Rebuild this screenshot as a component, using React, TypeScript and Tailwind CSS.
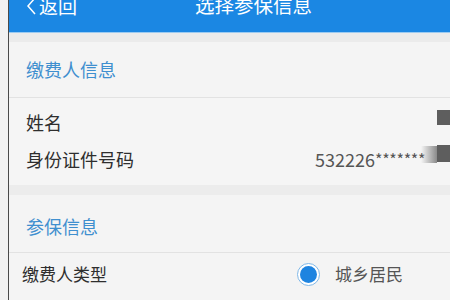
import React from "react";

const font = { fontFamily: '"Noto Sans CJK SC", "Noto Sans", sans-serif' };

export default function App() {
  return (
    <div className="w-[450px] h-[300px] overflow-hidden flex bg-[#f4f4f4]" style={font}>
      <div className="w-[8px] bg-[#f2f2f2]" />
      <div className="w-[1px] bg-[#4a4a4a]" />
      <div className="flex-1 flex flex-col">
        <div className="h-[32px] bg-[#1b87e3] relative overflow-hidden">
          <div className="absolute left-[17px] top-[-8px] flex items-center text-white text-[19px] leading-[28px]">
            <svg width="11" height="20" viewBox="0 0 11 20" className="mr-[2px]">
              <path d="M9 2 L2 10 L9 18" fill="none" stroke="white" strokeWidth="1.5" />
            </svg>
            <span>返回</span>
          </div>
          <div className="absolute left-[186px] top-[-9px] text-white text-[19.5px] leading-[28px]">选择参保信息</div>
        </div>
        <div className="h-[1px] bg-[#9ccbf1]" />
        <div className="h-[9px] bg-[#ebebeb]" />
        <div className="h-[55px] flex items-center pl-[17px] text-[18px] text-[#3f8fcf]">缴费人信息</div>
        <div className="h-[1px] bg-[#e2e2e2]" />
        <div className="pt-[6px] pb-[7px] bg-[#f5f5f5]">
          <div className="h-[37px] flex items-center pl-[17px] pr-0 text-[18px] text-[#2e2e2e] relative">
            <span>姓名</span>
            <div className="absolute right-0 top-[6px] w-[13px] h-[15px] bg-[#5e5e5e]" />
          </div>
          <div className="h-[37px] flex items-center pl-[17px] text-[18px] text-[#2e2e2e] relative">
            <span>身份证件号码</span>
            <span className="absolute left-[306px] top-[5px] text-[#555] text-[18px] leading-[26px] whitespace-nowrap">
              532226<span className="text-[16px] tracking-[-0.3px] align-[1px]">*******</span>
            </span>
            <div className="absolute right-[13px] top-[5px] w-[16px] h-[17px] bg-gradient-to-r from-[#f5f5f5]/0 to-[#8a8a8a]" />
            <div className="absolute right-0 top-[4px] w-[13px] h-[17px] bg-[#5e5e5e]" />
          </div>
        </div>
        <div className="h-[10px] bg-[#ececec]" />
        <div className="h-[57px] flex items-center pl-[17px] pt-[5px] text-[18px] text-[#3f8fcf]">参保信息</div>
        <div className="h-[1px] bg-[#e2e2e2]" />
        <div className="h-[42px] flex items-center pl-[13px] text-[17px] text-[#2e2e2e] relative">
          <span>缴费人类型</span>
          <div className="absolute left-[288px] top-[10px] w-[23px] h-[23px] rounded-full border-[1.5px] border-[#7fb8e8] bg-white flex items-center justify-center">
            <div className="w-[17px] h-[17px] rounded-full bg-[#1e84e0]" />
          </div>
          <span className="absolute left-[326px] top-[8px] text-[#555] leading-[26px]">城乡居民</span>
        </div>
      </div>
    </div>
  );
}
